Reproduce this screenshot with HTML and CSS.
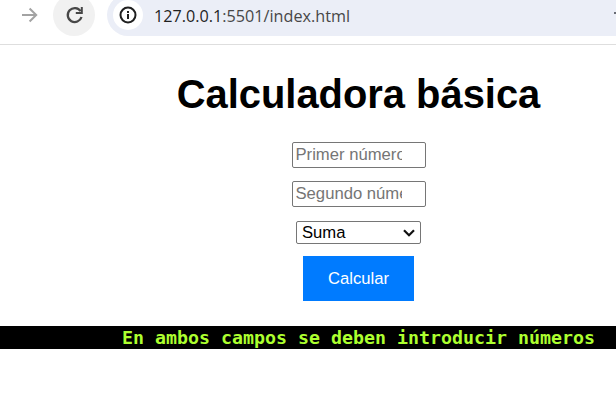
FILE: index.html
```html
<!DOCTYPE html>
<html lang="es">
<head>
<meta charset="utf-8">
<title>Calculadora básica</title>
<link rel="stylesheet" href="styles.css">
</head>
<body>
<header class="toolbar">
  <svg class="forward" width="18" height="18" viewBox="0 0 18 18"><path d="M1 9H15M8.6 2.5L15.2 9L8.6 15.5"/></svg>
  <div class="reload">
    <svg width="20" height="20" viewBox="0 0 20 20"><path class="arc" d="M15.6 6.2A7 7 0 1 0 16.5 12"/><path class="tip" d="M17.8 2V9H10.8V7H15.8V2Z"/></svg>
  </div>
  <div class="address">
    <div class="info"><svg width="18" height="18" viewBox="0 0 18 18"><circle cx="9" cy="9" r="7.5"/><path d="M9 8V13M9 5V7"/></svg></div>
    <span class="url"><span class="host">127.0.0.1</span>:5501/index.html</span>
    <span class="star"></span>
  </div>
</header>
<main class="viewport">
  <div class="page">
    <h1>Calculadora básica</h1>
    <form class="calc">
      <input type="text" placeholder="Primer número">
      <input type="text" placeholder="Segundo número">
      <div class="picker">
        <select><option>Suma</option></select>
        <svg width="12" height="8" viewBox="0 0 12 8"><path d="M1 1.2L6 6.2L11 1.2"/></svg>
      </div>
      <button type="button">Calcular</button>
    </form>
    <div class="message">En ambos campos se deben introducir números</div>
  </div>
</main>
</body>
</html>
```
FILE: styles.css
```css
* { box-sizing: border-box; }
html { overflow: hidden; }
body {
  margin: 0;
  width: 616px;
  height: 420px;
  overflow: hidden;
  background: #fff;
  font-family: "Liberation Sans", Arial, sans-serif;
}
.toolbar {
  display: flex;
  align-items: flex-start;
  height: 45px;
  border-bottom: 1px solid #dedede;
  overflow: hidden;
}
.forward {
  flex: none;
  margin: 6px 12px 0 21px;
  fill: none;
  stroke: #a3a3a3;
  stroke-width: 2;
}
.reload {
  flex: none;
  display: flex;
  align-items: center;
  justify-content: center;
  width: 42px;
  height: 42px;
  margin: -6px 12px 0 2px;
  padding-left: 1px;
  border-radius: 50%;
  background: #f1f1f1;
}
.arc { fill: none; stroke: #474747; stroke-width: 2.3; }
.tip { fill: #474747; }
.address {
  flex: 1;
  display: flex;
  align-items: center;
  min-width: 0;
  height: 42px;
  margin-top: -6px;
  padding-left: 6px;
  border-radius: 21px 0 0 21px;
  background: #ebeef7;
}
.info {
  display: flex;
  align-items: center;
  justify-content: center;
  width: 30px;
  height: 30px;
  border-radius: 50%;
  background: #fff;
}
.info svg { fill: none; stroke: #1f1f1f; stroke-width: 2; }
.url {
  margin: 2px 0 0 11px;
  color: #474747;
  font-family: "Open Sans", sans-serif;
  font-size: 16.2px;
  white-space: nowrap;
}
.host { color: #1f1f1f; }
.star { width: 2px; height: 2px; margin: -4px 0 0 auto; background: #696c74; }
.viewport { width: 616px; overflow: hidden; }
.page { width: 717px; }
h1 {
  margin: 26px 0 0;
  font-size: 39.9px;
  line-height: 46px;
  text-align: center;
  white-space: nowrap;
}
.calc {
  display: flex;
  flex-direction: column;
  align-items: center;
  margin-top: 25px;
}
input {
  width: 134px;
  height: 26px;
  margin-bottom: 13px;
  padding: 0 23px 0 3px;
  border: 1px solid #767676;
  border-radius: 2px;
  background: #fff;
  font: 16.67px "Liberation Sans", Arial, sans-serif;
}
input::placeholder { color: #757575; }
.picker {
  display: grid;
  align-items: center;
  width: 125px;
  height: 23px;
  margin: 1px 0 12px;
}
.picker select {
  grid-area: 1 / 1;
  width: 125px;
  height: 23px;
  padding: 0 5px;
  appearance: none;
  border: 1px solid #767676;
  border-radius: 2px;
  background: #fff;
  color: #000;
  font: 16.67px "Liberation Sans", Arial, sans-serif;
}
.picker svg {
  grid-area: 1 / 1;
  justify-self: end;
  margin-right: 6px;
  fill: none;
  stroke: #111;
  stroke-width: 2.2;
  pointer-events: none;
}
button {
  width: 111px;
  height: 45px;
  padding: 0;
  border: 0;
  background: #007bff;
  color: #fff;
  font: 16.67px "Liberation Sans", Arial, sans-serif;
}
.message {
  height: 23px;
  margin-top: 25px;
  background: #000;
  color: #adff2f;
  font: bold 18.27px/23px "DejaVu Sans Mono", monospace;
  text-align: center;
  white-space: nowrap;
}
```
